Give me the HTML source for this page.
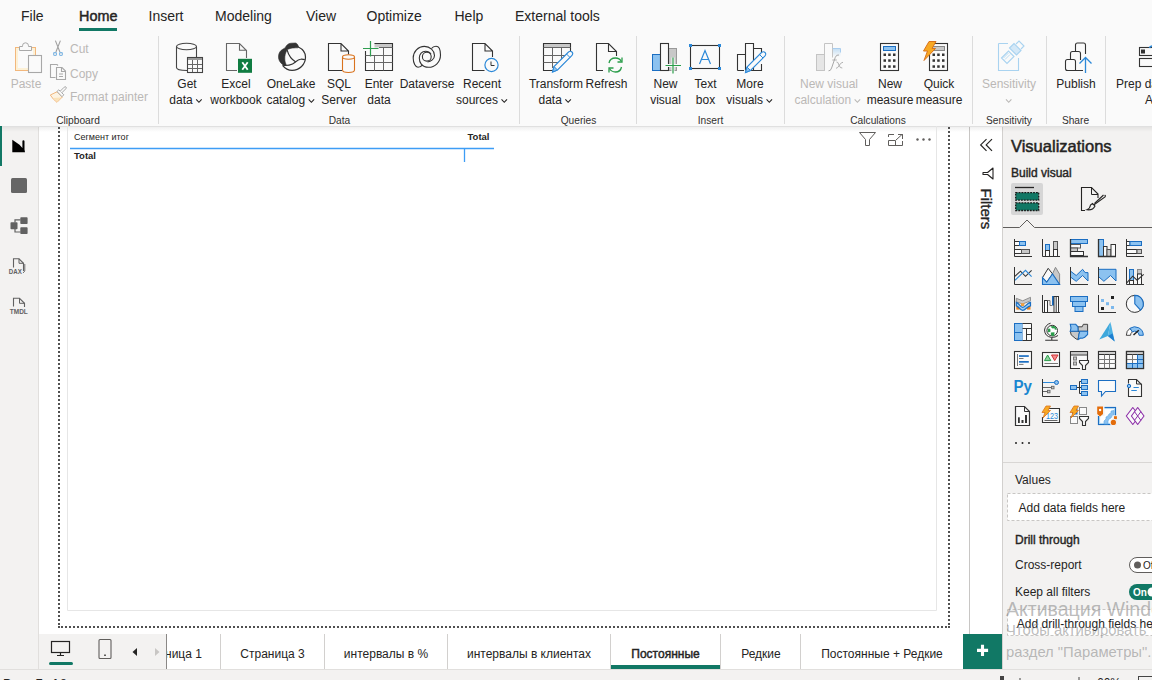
<!DOCTYPE html>
<html><head><meta charset="utf-8"><style>
html,body{margin:0;padding:0;width:1152px;height:680px;overflow:hidden;background:#fff}
svg{position:absolute;left:0;top:0;display:block}
text{font-family:"Liberation Sans",sans-serif}
</style></head><body>
<svg width="1152" height="680" viewBox="0 0 1152 680">
<rect x="0" y="0" width="1152" height="680" fill="#ffffff" />
<rect x="0" y="0" width="1152" height="126" fill="#fafafa" />
<rect x="0" y="126" width="38" height="543" fill="#f3f2f1" />
<line x1="38.5" y1="126" x2="38.5" y2="669" stroke="#e1dfdd" stroke-width="1" />
<line x1="969.5" y1="126" x2="969.5" y2="634" stroke="#c8c6c4" stroke-width="1" />
<rect x="1002" y="126" width="150" height="543" fill="#f3f2f1" />
<line x1="1002.5" y1="126" x2="1002.5" y2="669" stroke="#d2d0ce" stroke-width="1" />
<rect x="0" y="669" width="1152" height="11" fill="#f3f2f1" />
<line x1="0" y1="669.5" x2="1152" y2="669.5" stroke="#e1dfdd" stroke-width="1" />
<line x1="0" y1="126.5" x2="1152" y2="126.5" stroke="#e0e0e0" stroke-width="1" />
<defs><linearGradient id="sh" x1="0" y1="0" x2="0" y2="1"><stop offset="0" stop-color="#000" stop-opacity="0.06"/><stop offset="1" stop-color="#000" stop-opacity="0"/></linearGradient></defs>
<rect x="0" y="127" width="1152" height="5" fill="url(#sh)" />
<text x="21" y="21" font-size="14" fill="#252423" font-weight="normal" text-anchor="start" >File</text>
<text x="148.5" y="21" font-size="14" fill="#252423" font-weight="normal" text-anchor="start" >Insert</text>
<text x="215" y="21" font-size="14" fill="#252423" font-weight="normal" text-anchor="start" >Modeling</text>
<text x="306" y="21" font-size="14" fill="#252423" font-weight="normal" text-anchor="start" >View</text>
<text x="366.5" y="21" font-size="14" fill="#252423" font-weight="normal" text-anchor="start" >Optimize</text>
<text x="454.5" y="21" font-size="14" fill="#252423" font-weight="normal" text-anchor="start" >Help</text>
<text x="515" y="21" font-size="14" fill="#252423" font-weight="normal" text-anchor="start" >External tools</text>
<text x="79" y="21" font-size="14.4" fill="#252423" stroke="#252423" stroke-width="0.45" text-anchor="start" >Home</text>
<rect x="79" y="28" width="38" height="3" fill="#117865" />
<line x1="158.5" y1="36" x2="158.5" y2="124" stroke="#dcdcdc" stroke-width="1" />
<line x1="519.5" y1="36" x2="519.5" y2="124" stroke="#dcdcdc" stroke-width="1" />
<line x1="636.5" y1="36" x2="636.5" y2="124" stroke="#dcdcdc" stroke-width="1" />
<line x1="784.5" y1="36" x2="784.5" y2="124" stroke="#dcdcdc" stroke-width="1" />
<line x1="972.5" y1="36" x2="972.5" y2="124" stroke="#dcdcdc" stroke-width="1" />
<line x1="1046.5" y1="36" x2="1046.5" y2="124" stroke="#dcdcdc" stroke-width="1" />
<line x1="1105.5" y1="36" x2="1105.5" y2="124" stroke="#dcdcdc" stroke-width="1" />
<text x="78" y="123.5" font-size="10.2" fill="#323130" font-weight="normal" text-anchor="middle" >Clipboard</text>
<text x="339.5" y="123.5" font-size="10.2" fill="#323130" font-weight="normal" text-anchor="middle" >Data</text>
<text x="578.5" y="123.5" font-size="10.2" fill="#323130" font-weight="normal" text-anchor="middle" >Queries</text>
<text x="710.5" y="123.5" font-size="10.2" fill="#323130" font-weight="normal" text-anchor="middle" >Insert</text>
<text x="878" y="123.5" font-size="10.2" fill="#323130" font-weight="normal" text-anchor="middle" >Calculations</text>
<text x="1009" y="123.5" font-size="10.2" fill="#323130" font-weight="normal" text-anchor="middle" >Sensitivity</text>
<text x="1075.5" y="123.5" font-size="10.2" fill="#323130" font-weight="normal" text-anchor="middle" >Share</text>
<text x="26" y="88" font-size="12" fill="#bab8b6" font-weight="normal" text-anchor="middle" >Paste</text>
<text x="70" y="53" font-size="12" fill="#bab8b6" font-weight="normal" text-anchor="start" >Cut</text>
<text x="70" y="78" font-size="12" fill="#bab8b6" font-weight="normal" text-anchor="start" >Copy</text>
<text x="70" y="101" font-size="12" fill="#bab8b6" font-weight="normal" text-anchor="start" >Format painter</text>
<text x="187" y="88" font-size="12" fill="#252423" font-weight="normal" text-anchor="middle" >Get</text>
<text x="169.32" y="104" font-size="12" fill="#252423" font-weight="normal" text-anchor="start" >data</text>
<path d="M196.18 99.3 L198.93 102.3 L201.68 99.3" fill="none" stroke="#252423" stroke-width="1.1"/>
<text x="236" y="88" font-size="12" fill="#252423" font-weight="normal" text-anchor="middle" >Excel</text>
<text x="236" y="104" font-size="12" fill="#252423" font-weight="normal" text-anchor="middle" >workbook</text>
<text x="291" y="88" font-size="12" fill="#252423" font-weight="normal" text-anchor="middle" >OneLake</text>
<text x="266.45" y="104" font-size="12" fill="#252423" font-weight="normal" text-anchor="start" >catalog</text>
<path d="M308.65 99.3 L311.40 102.3 L314.15 99.3" fill="none" stroke="#252423" stroke-width="1.1"/>
<text x="339" y="88" font-size="12" fill="#252423" font-weight="normal" text-anchor="middle" >SQL</text>
<text x="339" y="104" font-size="12" fill="#252423" font-weight="normal" text-anchor="middle" >Server</text>
<text x="379" y="88" font-size="12" fill="#252423" font-weight="normal" text-anchor="middle" >Enter</text>
<text x="379" y="104" font-size="12" fill="#252423" font-weight="normal" text-anchor="middle" >data</text>
<text x="427" y="88" font-size="12" fill="#252423" font-weight="normal" text-anchor="middle" >Dataverse</text>
<text x="482" y="88" font-size="12" fill="#252423" font-weight="normal" text-anchor="middle" >Recent</text>
<text x="455.99" y="104" font-size="12" fill="#252423" font-weight="normal" text-anchor="start" >sources</text>
<path d="M501.51 99.3 L504.26 102.3 L507.01 99.3" fill="none" stroke="#252423" stroke-width="1.1"/>
<text x="556" y="88" font-size="12" fill="#252423" font-weight="normal" text-anchor="middle" >Transform</text>
<text x="538.52" y="104" font-size="12" fill="#252423" font-weight="normal" text-anchor="start" >data</text>
<path d="M565.38 99.3 L568.13 102.3 L570.88 99.3" fill="none" stroke="#252423" stroke-width="1.1"/>
<text x="606.5" y="88" font-size="12" fill="#252423" font-weight="normal" text-anchor="middle" >Refresh</text>
<text x="665.5" y="88" font-size="12" fill="#252423" font-weight="normal" text-anchor="middle" >New</text>
<text x="665.5" y="104" font-size="12" fill="#252423" font-weight="normal" text-anchor="middle" >visual</text>
<text x="705.5" y="88" font-size="12" fill="#252423" font-weight="normal" text-anchor="middle" >Text</text>
<text x="705.5" y="104" font-size="12" fill="#252423" font-weight="normal" text-anchor="middle" >box</text>
<text x="750" y="88" font-size="12" fill="#252423" font-weight="normal" text-anchor="middle" >More</text>
<text x="726.36" y="104" font-size="12" fill="#252423" font-weight="normal" text-anchor="start" >visuals</text>
<path d="M766.54 99.3 L769.29 102.3 L772.04 99.3" fill="none" stroke="#252423" stroke-width="1.1"/>
<text x="890" y="88" font-size="12" fill="#252423" font-weight="normal" text-anchor="middle" >New</text>
<text x="890" y="104" font-size="12" fill="#252423" font-weight="normal" text-anchor="middle" >measure</text>
<text x="939" y="88" font-size="12" fill="#252423" font-weight="normal" text-anchor="middle" >Quick</text>
<text x="939" y="104" font-size="12" fill="#252423" font-weight="normal" text-anchor="middle" >measure</text>
<text x="1076" y="88" font-size="12" fill="#252423" font-weight="normal" text-anchor="middle" >Publish</text>
<text x="829" y="88" font-size="12" fill="#bab8b6" font-weight="normal" text-anchor="middle" >New visual</text>
<text x="794.45" y="104" font-size="12" fill="#bab8b6" font-weight="normal" text-anchor="start" >calculation</text>
<path d="M854.65 99.3 L857.40 102.3 L860.15 99.3" fill="none" stroke="#bab8b6" stroke-width="1.1"/>
<text x="1009" y="88" font-size="12" fill="#bab8b6" font-weight="normal" text-anchor="middle" >Sensitivity</text>
<path d="M1006 99.3 L1008.7 102.3 L1011.4 99.3" fill="none" stroke="#bab8b6" stroke-width="1.1"/>
<text x="1116" y="88" font-size="12" fill="#252423" font-weight="normal" text-anchor="start" >Prep data for AI</text>
<text x="1145" y="104" font-size="12" fill="#252423" font-weight="normal" text-anchor="start" >AI</text>
<g id="ribbon-icons" fill="none" stroke-linejoin="miter">
<!-- Paste -->
<rect x="15.5" y="47.5" width="20" height="23" fill="#fdf1d6" stroke="#f2b77c" stroke-width="1"/>
<rect x="18" y="50" width="15" height="18" fill="#fafafa" stroke="none"/>
<path d="M19.5 50.5 V46.5 H22.5 V45.8 A3 3 0 0 1 28.5 45.8 V46.5 H31.5 V50.5 Z" fill="#fafafa" stroke="#a8a8a8" stroke-width="1"/>
<rect x="28.5" y="55.5" width="13" height="17" fill="#fafafa" stroke="#a8a8a8" stroke-width="1.1"/>
<!-- Cut -->
<path d="M55.4 40.6 L59.9 52 M60.4 40.6 L55.9 52" stroke="#a0a0a0" stroke-width="1.1"/>
<rect x="53.6" y="52.6" width="2.9" height="2.9" rx="0.9" fill="#f0f0f0" stroke="#82b8e4" stroke-width="1.1"/>
<rect x="59.5" y="52.6" width="2.9" height="2.9" rx="0.9" fill="#f0f0f0" stroke="#82b8e4" stroke-width="1.1"/>

<!-- Copy -->
<path d="M55.5 77.5 H50.5 V64.5 H57 L58 65.5" stroke="#a8a8a8" stroke-width="1.1"/>
<path d="M56.5 67.5 H62 L65.5 71 V79.5 H56.5 Z M61.5 67.5 V71.5 H65.5 M59 74 H63 M59 76.5 H63" stroke="#a8a8a8" stroke-width="1.1"/>
<!-- Format painter -->
<path d="M57 91.8 L50.3 95 Q53 99.5 57 102.3 L62.3 97 Z" fill="#fdf3e2" stroke="#f2b77c" stroke-width="1"/>
<path d="M53 98 Q55.5 99.5 57 102 L61 97.5 Z" fill="#fbe2b8"/>
<path d="M57 91.5 L58.8 89.8 L63.8 94.8 L62 96.7 Z" fill="#fafafa" stroke="#a8a8a8" stroke-width="1"/>
<path d="M60.2 91.2 L64.2 87.2 Q65.3 86.3 66 87 Q66.7 87.8 65.8 88.8 L61.8 92.8" fill="#fafafa" stroke="#a8a8a8" stroke-width="1"/>

<!-- Get data -->
<path d="M176.5 46.5 V67.5 Q176.5 70.5 187 70.5" stroke="#444" stroke-width="1.1"/>
<path d="M196.5 46.5 V57" stroke="#444" stroke-width="1.1"/>
<ellipse cx="186.5" cy="46.5" rx="10" ry="3.3" fill="#fafafa" stroke="#444" stroke-width="1.1"/>
<rect x="187.5" y="57.5" width="15" height="15" fill="#fafafa" stroke="#444" stroke-width="1.1"/>
<rect x="188" y="58" width="14" height="2" fill="#999" stroke="none"/>
<path d="M192.5 60 V72 M197.5 60 V72 M188 64.5 H202 M188 68.5 H202" stroke="#666" stroke-width="1"/>

<!-- Excel -->
<path d="M237 70.5 H226.5 V43.5 H239.5 L246.5 50.5 V58 M239.5 43.5 V50.3 H246.5" stroke="#666" stroke-width="1.1"/>
<rect x="238" y="58.8" width="14" height="14" fill="#107c41" stroke="none"/>
<path d="M242.3 62.3 L247.7 69.8 M247.7 62.3 L242.3 69.8" stroke="#fff" stroke-width="1.8"/>

<!-- OneLake -->
<path d="M285 48 C286.5 45 288.5 43.3 291 43.2 L295.5 43 C297 43.2 298 45 298.8 47.2 L297.7 47.8 C295 47.8 292.5 48 291 48.3 C289 48.8 287.8 49.3 287.1 50 C285.5 52.5 284.6 56 284.8 59 C284.9 61.5 285.4 63 286.2 64.5 L284.8 66 C282 64.5 279.3 62 278.6 58.5 C278.2 55 279 52.5 281 50.5 C282.5 49.2 284 48.5 285 48 Z" fill="#333" stroke="#333" stroke-width="0.6"/>
<path d="M298.3 47 C302.5 49 305.5 52.5 305.5 57 C305.5 64.5 299.5 70.4 292.1 70.4 C288.5 70.4 285 68.5 282.5 65.4" stroke="#333" stroke-width="1.2"/>
<path d="M287.1 50 C288.5 55 291.5 59.5 295.8 62" stroke="#333" stroke-width="1.1"/>
<path d="M283.2 65.4 C286.5 65.6 290 65.2 292.5 64 C295 62.8 297.5 59.5 300.5 59.2 C302 59 303.3 59.2 304.8 59.6" stroke="#333" stroke-width="1.1"/>

<!-- SQL Server -->
<path d="M342 70.5 H328.5 V43.5 H341 L348.5 51 V54.5 M341 43.5 V51 H348.5" stroke="#333" stroke-width="1.1"/>
<path d="M342.5 57 V70 Q342.5 72.5 348.5 72.5 Q354.5 72.5 354.5 70 V57" fill="#fafafa" stroke="#d9731e" stroke-width="1.1"/>
<ellipse cx="348.5" cy="57" rx="6" ry="2.2" fill="#fafafa" stroke="#d9731e" stroke-width="1.1"/>

<!-- Enter data -->
<rect x="374.5" y="43.5" width="18" height="4" fill="#c8c8c8" stroke="none"/>
<path d="M374.5 43.5 H392.5 V70.5 H365.5 V51" stroke="#333" stroke-width="1.1"/>
<path d="M379 47.5 H392.5 M374.5 55.5 V70.5 M383.5 47.5 V70.5 M365.5 55.5 H392.5 M365.5 62.5 H392.5" stroke="#666" stroke-width="1"/>
<path d="M370.5 41 V56.5 M363 48.5 H378.5" stroke="#2e9e4f" stroke-width="1.2"/>

<!-- Dataverse -->
<path d="M427.5 62 C431 61.5 434.5 59 434.5 55.5 C434.5 50.5 430 46.4 424.5 46.4 C418 46.4 413.2 52 413.2 58 C413.2 63 415.5 67.3 418 67.3 C420 67.3 421.5 66 422.5 64.8" stroke="#333" stroke-width="1.1"/>
<path d="M431.5 48.5 C432.5 47 434 46.2 436 46.2 C438.8 46.2 440.5 50 440.5 55 C440.5 62 435 67.3 428.5 67.3 C421.5 67.3 419.3 62 419.3 58 C419.3 54 422 51.3 425.5 51.3 C428 51.3 430 52.5 431 54" stroke="#333" stroke-width="1.1"/>
<circle cx="426.8" cy="56.7" r="4.4" stroke="#333" stroke-width="1.1"/>

<!-- Recent sources -->
<path d="M484.5 70.5 H472.5 V43.5 H485 L492.5 51 V57 M485 43.5 V51 H492.5" stroke="#333" stroke-width="1.1"/>
<circle cx="491.5" cy="65" r="6.6" fill="#fafafa" stroke="#2b88d8" stroke-width="1.2"/>
<path d="M491 61.5 V65.5 H494.5" stroke="#333" stroke-width="1"/>

<!-- Transform data -->
<rect x="543.5" y="43.5" width="27" height="3.5" fill="#c8c8c8" stroke="none"/>
<path d="M553 70.5 H543.5 V43.5 H570.5 V55" stroke="#333" stroke-width="1.1"/>
<path d="M543.5 47.5 H570.5 M552.5 47.5 V68 M561.5 47.5 V60 M543.5 55.5 H566 M543.5 62.5 H558" stroke="#666" stroke-width="1"/>
<path d="M552.5 72 L554 66.5 L568.5 52 Q570.5 50.5 572 52 Q573.5 53.5 572 55.5 L557.5 70 Z" fill="#fafafa" stroke="#2b88d8" stroke-width="1.1"/>
<path d="M552.5 72 L554 66.5 L557.5 70 Z" fill="#8cc2f0" stroke="#2b88d8" stroke-width="1"/>
<path d="M566.5 54 L570 57.5" stroke="#2b88d8" stroke-width="1"/>

<!-- Refresh -->
<path d="M603 70.5 H596.5 V43.5 H608.5 L616.5 51.5 V56 M608.5 43.5 V51.5 H616.5" stroke="#333" stroke-width="1.1"/>
<path d="M609 63 Q610 58 615.5 58 Q619.5 58 621.5 61.5 M621.5 67 Q620.5 72 615.5 72 Q611.5 72 609.5 68.5" stroke="#2a9d4a" stroke-width="1.3"/>
<path d="M622 57.5 V62 H617.5 M609 72.5 V68 H613.5" stroke="#2a9d4a" stroke-width="1.3"/>

<!-- New visual -->
<rect x="652.5" y="54.5" width="8" height="16" fill="#8cc2f0" stroke="#1b6ec2" stroke-width="1"/>
<rect x="668.5" y="48.5" width="8" height="22" fill="#c8c8c8" stroke="#999" stroke-width="1"/>
<rect x="660.5" y="43.5" width="8" height="27" fill="#fafafa" stroke="#333" stroke-width="1.1"/>
<path d="M673 57.5 V73.5 M665.5 65.5 H681" stroke="#fafafa" stroke-width="3"/>
<path d="M673 57.5 V73.5 M665.5 65.5 H681" stroke="#2a9d4a" stroke-width="1.2"/>

<!-- Text box -->
<rect x="690.5" y="45.5" width="29" height="23" stroke="#333" stroke-width="1.1"/>
<rect x="689" y="44" width="3" height="3" fill="#2b88d8" stroke="none"/>
<rect x="718" y="44" width="3" height="3" fill="#2b88d8" stroke="none"/>
<rect x="689" y="67" width="3" height="3" fill="#2b88d8" stroke="none"/>
<rect x="718" y="67" width="3" height="3" fill="#2b88d8" stroke="none"/>
<path d="M699.5 64 L705 50.5 L710.5 64 M701.3 59.5 H708.7" stroke="#2b88d8" stroke-width="1.2"/>

<!-- More visuals -->
<path d="M737.5 70.5 V54.5 H745.5 M745.5 70.5 V43.5 H753.5 V70.5 M753.5 48.5 H761.5 V58 M761.5 64 V70.5 H749 M737.5 70.5 H744" stroke="#333" stroke-width="1.1"/>
<path d="M745.5 72.5 L747 67 L761.5 52.5 Q763.5 51 765 52.5 Q766.5 54 765 56 L750.5 70.5 Z" fill="#fafafa" stroke="#2b88d8" stroke-width="1.1"/>
<path d="M745.5 72.5 L747 67 L750.5 70.5 Z" fill="#8cc2f0" stroke="#2b88d8" stroke-width="1"/>
<path d="M759.5 54.5 L763 58" stroke="#2b88d8" stroke-width="1"/>

<!-- New visual calculation (disabled) -->
<rect x="816.5" y="54.5" width="8" height="16" fill="#e6e6e6" stroke="#c4c4c4" stroke-width="1"/>
<path d="M824.5 70.5 V43.5 H832.5 V57.5" fill="#fafafa" stroke="#c4c4c4" stroke-width="1"/>
<defs><linearGradient id="nvc" x1="0" y1="0" x2="0" y2="1"><stop offset="0" stop-color="#c7e0f4"/><stop offset="1" stop-color="#c7e0f4" stop-opacity="0"/></linearGradient></defs>
<path d="M833 49 H840.5 V57 H833 Z" fill="url(#nvc)" stroke="none"/>
<path d="M832.5 48.5 H840.5 V52.5" stroke="#a9cdee" stroke-width="1"/>
<path d="M828.5 70.8 Q830.6 71.2 831.6 68 L835.3 57.3 Q836.4 54.4 839 55" stroke="#a8a8a8" stroke-width="1"/>
<path d="M832.3 60 H836.8" stroke="#a8a8a8" stroke-width="0.9"/>
<path d="M836.5 62 Q838 61.5 839 65 Q840 68.5 842.3 68" stroke="#a8a8a8" stroke-width="0.9"/>
<path d="M843 62.3 Q841.5 62 839.5 65 Q837.5 68.5 836 68.3" stroke="#a8a8a8" stroke-width="0.9"/>

<!-- New measure -->
<rect x="880.5" y="43.5" width="18" height="27" fill="#fafafa" stroke="#333" stroke-width="1.1"/>
<rect x="883.5" y="46.5" width="12" height="4" fill="#8cc2f0" stroke="#1b6ec2" stroke-width="1"/>
<g fill="#333" stroke="none">
<rect x="883.5" y="53.5" width="2.5" height="2.5"/><rect x="888.2" y="53.5" width="2.5" height="2.5"/><rect x="893" y="53.5" width="2.5" height="2.5"/>
<rect x="883.5" y="59.3" width="2.5" height="2.5"/><rect x="888.2" y="59.3" width="2.5" height="2.5"/><rect x="893" y="59.3" width="2.5" height="2.5"/>
<rect x="883.5" y="65.3" width="2.5" height="2.5"/><rect x="888.2" y="65.3" width="2.5" height="2.5"/><rect x="893" y="65.3" width="2.5" height="2.5"/>
</g>

<!-- Quick measure -->
<rect x="929.5" y="43.5" width="18" height="27" fill="#fafafa" stroke="#333" stroke-width="1.1"/>
<rect x="932.5" y="46.5" width="12" height="4" fill="#c8c8c8" stroke="#888" stroke-width="1"/>
<g fill="#333" stroke="none">
<rect x="932.5" y="53.5" width="2.5" height="2.5"/><rect x="937.2" y="53.5" width="2.5" height="2.5"/><rect x="942" y="53.5" width="2.5" height="2.5"/>
<rect x="932.5" y="59.3" width="2.5" height="2.5"/><rect x="937.2" y="59.3" width="2.5" height="2.5"/><rect x="942" y="59.3" width="2.5" height="2.5"/>
<rect x="932.5" y="65.3" width="2.5" height="2.5"/><rect x="937.2" y="65.3" width="2.5" height="2.5"/><rect x="942" y="65.3" width="2.5" height="2.5"/>
</g>
<path d="M929 41.5 H936 L932 48.5 H935.5 L924 60.5 L927.5 51 H923.5 Z" fill="#f7a823" stroke="#d9731e" stroke-width="1"/>

<!-- Sensitivity (disabled) -->
<path d="M998.5 43.5 H1008 M1018.5 58 V70.5 H998.5 V43.5" stroke="#a9d3f0" stroke-width="1.1"/>
<path d="M1001.5 58 L1008.5 51 L1014 56.5 L1007 63.5 Z" stroke="#a9d3f0" stroke-width="1.1"/>
<path d="M1003.5 58 L1008.5 53 M1005 59.5 L1010 54.5" stroke="#a9d3f0" stroke-width="0.8"/>
<path d="M1009.5 48 L1014 43.5 L1021 50.5 L1016.5 55 Z" fill="#d4e8f7" stroke="#a9d3f0" stroke-width="1.1"/>
<path d="M1016 44 L1019 41 L1024 46 L1021 49" stroke="#a9d3f0" stroke-width="1.1"/>

<!-- Publish -->
<path d="M1075.5 70.5 H1067.5 Q1065.5 70.5 1065.5 68.5 V61.5 Q1065.5 59.5 1067.5 59.5 H1073.5 Q1075.5 59.5 1075.5 61.5 V70.5 M1075.5 70.5 H1083" stroke="#333" stroke-width="1.1"/>
<path d="M1070.5 59.5 V53.5 Q1070.5 51.5 1072.5 51.5 H1078.5 Q1080.5 51.5 1080.5 53.5 V60" stroke="#333" stroke-width="1.1"/>
<path d="M1075.5 51.5 V45 Q1075.5 43 1077.5 43 H1083.5 Q1085.5 43 1085.5 45 V54" stroke="#333" stroke-width="1.1"/>
<path d="M1085.5 73 V57.5 M1079.5 63.5 L1085.5 57.5 L1091.5 63.5" stroke="#2b88d8" stroke-width="1.3"/>

<!-- Prep data for AI -->
<rect x="1139.5" y="47.5" width="14" height="8" stroke="#333" stroke-width="1.1"/>
<rect x="1141" y="49.5" width="4" height="4" fill="#333" stroke="none"/>
<rect x="1139.5" y="58.5" width="14" height="8" stroke="#333" stroke-width="1.1"/>
<path d="M1149.5 48 Q1150 46 1152.5 46" stroke="#2b88d8" stroke-width="1.6"/>
</g>

<path d="M59 127 V625 M949 127 V625 M61 627 H947" fill="none" stroke="#505050" stroke-width="2" stroke-dasharray="2 2"/>
<rect x="58" y="626" width="2" height="2" fill="#505050" />
<rect x="948" y="626" width="2" height="2" fill="#505050" />
<path d="M67.5 126 V610.5 H936.5 V126" fill="none" stroke="#e6e6e6" stroke-width="1"/>
<text x="74" y="140.3" font-size="9" fill="#252423" font-weight="normal" text-anchor="start" >Сегмент итог</text>
<text x="489.5" y="140.3" font-size="9.5" fill="#252423" font-weight="bold" text-anchor="end" >Total</text>
<line x1="70" y1="148.5" x2="494" y2="148.5" stroke="#3d9df5" stroke-width="1.3" />
<line x1="464.5" y1="148" x2="464.5" y2="162" stroke="#3d9df5" stroke-width="1.3" />
<text x="74" y="159" font-size="9.5" fill="#252423" font-weight="bold" text-anchor="start" >Total</text>
<path d="M859.5 132.5 H875.5 L869.5 139.5 V145.5 H865.5 V139.5 Z" fill="none" stroke="#605e5c" stroke-width="1"/>
<path d="M888.5 137 V134.5 H894 M899 134.5 H902.5 V138 M902.5 141 V145.5 H888.5 V140.5 M888.5 140.5 H895.5 V145.5 M896 140 L902 134.5 M898 134.5 H902.5 V139" fill="none" stroke="#605e5c" stroke-width="1"/>
<circle cx="917.5" cy="139.5" r="1.2" fill="#605e5c"/>
<circle cx="923.5" cy="139.5" r="1.2" fill="#605e5c"/>
<circle cx="929.5" cy="139.5" r="1.2" fill="#605e5c"/>
<rect x="0" y="126" width="2" height="40" fill="#117865" />
<path d="M12.3 139.8 L19.5 144.8 L22.4 148 V141.2 Q22.4 140.3 23.4 140.3 Q24.5 140.3 24.5 141.2 V149.5 L25 152.3 H12.3 Z" fill="#000"/>
<rect x="11" y="178" width="16" height="15" fill="#666" rx="1.5"/>
<g fill="#616161"><rect x="10.5" y="222.3" width="7" height="7" rx="0.8"/><rect x="20.3" y="217.3" width="7.3" height="6.8" rx="0.8"/><rect x="20.3" y="227.2" width="7.3" height="6.8" rx="0.8"/></g>
<path d="M15 222.5 V219.8 H20.5 M15 229 V232 H20.5" fill="none" stroke="#616161" stroke-width="1.2"/>
<path d="M13.5 267.5 V258.8 H19 L23.5 263.3 V271" fill="none" stroke="#616161" stroke-width="1.1"/><path d="M19 258.8 V263.3 H23.5" fill="none" stroke="#616161" stroke-width="1"/><path d="M24.8 264 V271 L23 273" fill="none" stroke="#616161" stroke-width="0.9"/>
<text x="8.8" y="273.8" font-size="6.3" font-weight="bold" fill="#616161" textLength="13" lengthAdjust="spacingAndGlyphs">DAX</text>
<path d="M13.5 306.5 V298.3 H19.5 L24.5 303.3 V307" fill="none" stroke="#616161" stroke-width="1.1"/><path d="M19.5 298.3 V303.3 H24.5" fill="none" stroke="#616161" stroke-width="1"/>
<text x="9.8" y="313.8" font-size="6.3" font-weight="bold" fill="#616161" textLength="18" lengthAdjust="spacingAndGlyphs">TMDL</text>
<path d="M986.5 139.1 L980.7 144.9 L986.5 150.8 M992 139.1 L986.2 144.9 L992 150.8" fill="none" stroke="#252423" stroke-width="1.2"/>
<path d="M993 168 V179 L987.6 174.5 H983 V172.5 H987.6 Z" fill="none" stroke="#252423" stroke-width="1.1" stroke-linejoin="round"/>
<text x="0" y="0" font-size="15" fill="#252423" stroke="#252423" stroke-width="0.35" text-anchor="start" transform="translate(981,188.5) rotate(90)">Filters</text>
<text x="1011" y="152" font-size="16.5" fill="#252423" stroke="#252423" stroke-width="0.5" text-anchor="start" >Visualizations</text>
<text x="1011" y="177" font-size="12" fill="#252423" stroke="#252423" stroke-width="0.4" text-anchor="start" >Build visual</text>
<rect x="1011" y="183" width="32" height="32" fill="#d6d6d6" rx="2"/>
<g transform="translate(1014,239)">
<rect x="0.5" y="2.5" width="5" height="4" fill="#fafafa" stroke="#333"/>
<rect x="5.5" y="2.5" width="6" height="4" fill="#8cc2f0" stroke="#1b6ec2"/>
<rect x="0.5" y="10.5" width="7" height="4" fill="#fafafa" stroke="#333"/>
<rect x="7.5" y="10.5" width="8" height="4" fill="#c8c8c8" stroke="#555"/>
<path d="M0.5 0 V17.5 H18" fill="none" stroke="#333"/></g>
<g transform="translate(1042,239)">
<rect x="3.5" y="5.5" width="4" height="6" fill="#8cc2f0" stroke="#1b6ec2"/>
<rect x="3.5" y="11.5" width="4" height="6" fill="#fafafa" stroke="#333"/>
<rect x="11.5" y="2.5" width="4" height="8" fill="#c8c8c8" stroke="#555"/>
<rect x="11.5" y="10.5" width="4" height="7" fill="#fafafa" stroke="#333"/>
<path d="M0.5 0 V17.5 H18" fill="none" stroke="#333"/></g>
<g transform="translate(1070,239)">
<rect x="0.5" y="0.5" width="17" height="4" fill="#8cc2f0" stroke="#1b6ec2"/>
<rect x="0.5" y="5.5" width="10" height="3.5" fill="#fafafa" stroke="#333" stroke-opacity="0.8"/>
<rect x="0.5" y="9" width="7" height="3.5" fill="#c8c8c8" stroke="#555"/>
<rect x="0.5" y="12.5" width="13" height="4" fill="#fafafa" stroke="#333"/>
<path d="M0.5 0 V17.5 H18" fill="none" stroke="#333" stroke-width="1.3"/></g>
<g transform="translate(1098,239)">
<rect x="0.5" y="0.5" width="5" height="17" fill="#8cc2f0" stroke="#1b6ec2"/>
<rect x="5.5" y="7.5" width="3.5" height="10" fill="#fafafa" stroke="#333"/>
<rect x="9" y="10.5" width="4" height="7" fill="#c8c8c8" stroke="#555"/>
<rect x="13" y="5.5" width="4.5" height="12" fill="#fafafa" stroke="#333"/>
<path d="M0.5 0 V17.5 H18" fill="none" stroke="#333" stroke-width="1.3"/></g>
<g transform="translate(1126,239)">
<rect x="0.5" y="2.5" width="3.5" height="4" fill="#fafafa" stroke="#333"/>
<rect x="4" y="2.5" width="11.5" height="4" fill="#8cc2f0" stroke="#1b6ec2"/>
<rect x="0.5" y="10.5" width="10.5" height="4" fill="#fafafa" stroke="#333"/>
<rect x="11" y="10.5" width="4.5" height="4" fill="#c8c8c8" stroke="#555"/>
<path d="M0.5 0 V17.5 H18" fill="none" stroke="#333"/></g>
<g transform="translate(1014,267)">
<path d="M0.5 9.6 L6.5 4.2 L11.5 9.3 L17.6 3.3" fill="none" stroke="#333" stroke-width="1.1"/>
<path d="M0.5 13.7 L11.5 3.3 L17.6 9.6" fill="none" stroke="#2b88d8" stroke-width="1.1"/>
<path d="M0.5 0 V17.5 H18" fill="none" stroke="#333"/></g>
<g transform="translate(1042,267)">
<path d="M10.5 6.9 L13.5 0.3 L17.6 7.2 V17.5 Z" fill="#c8c8c8" stroke="#888"/>
<path d="M0.5 10.6 L6.2 1.3 L10.5 6.9 L4.7 15.2 Z" fill="#fafafa" stroke="#333"/>
<path d="M0.5 10.6 L4.7 15.2 L10.5 6.9 L17.6 17.5 H0.5 Z" fill="#8cc2f0" stroke="#1b6ec2" stroke-width="1.1"/></g>
<g transform="translate(1070,267)">
<path d="M0.5 4.1 L6.2 8.5 L12.6 2.3 L15.1 5.6 H18 V14 L12.6 8.5 L6.2 14.3 L0.5 10 Z" fill="#8cc2f0" stroke="#1b6ec2"/>
<path d="M0.5 0 V17.5 H18" fill="none" stroke="#333"/></g>
<g transform="translate(1098,267)">
<path d="M0.5 2.3 H18 V14 L12.5 8.5 L5.9 14.3 L0.5 9.6 Z" fill="#8cc2f0" stroke="#1b6ec2"/>
<path d="M0.5 0 V17.5 H18" fill="none" stroke="#333"/></g>
<g transform="translate(1126,267)">
<rect x="3.5" y="2.5" width="4" height="11" fill="#8cc2f0" stroke="#1b6ec2"/>
<rect x="3.5" y="13.5" width="4" height="4" fill="#fafafa" stroke="#333"/>
<rect x="11.5" y="2.5" width="4" height="4.5" fill="#c8c8c8" stroke="#888"/>
<rect x="11.5" y="7" width="4" height="10.5" fill="#fafafa" stroke="#333"/>
<path d="M0.5 16.2 L6.7 9.2 L11.1 13.2 L17.7 7.4" fill="none" stroke="#333" stroke-width="1.1"/>
<path d="M0.5 0 V17.5 H18" fill="none" stroke="#333"/></g>
<g transform="translate(1014,295)">
<path d="M2.3 3.3 L8.7 5.8 L16.5 2.3 V5.8 L8.7 9 L2.3 6.9 Z" fill="#c8c8c8" stroke="#888" stroke-width="0.9"/>
<rect x="2.3" y="11" width="3.5" height="3.6" fill="#e8821e"/>
<rect x="7" y="8.2" width="3.3" height="2.8" fill="#f0a040"/>
<rect x="13" y="11" width="3.5" height="3.6" fill="#e8821e"/>
<path d="M2.3 7.3 C5 7.8 6 12.3 8.7 12.3 C11.5 12.3 13 7.8 16.5 7.3 V10.8 C13 11.3 11.5 15.3 8.7 15.3 C6 15.3 5 11.3 2.3 10.8 Z" fill="#9fd0f5" stroke="#1b6ec2" stroke-width="1.2"/>
<path d="M0.5 0 V17.5 H18" fill="none" stroke="#333"/></g>
<g transform="translate(1042,295)">
<rect x="2.5" y="5.5" width="3" height="12" fill="#fff" stroke="#333"/>
<path d="M5.5 5.5 H8 V10.5 H10" fill="none" stroke="#777"/>
<rect x="10" y="1" width="2" height="9.5" fill="#1b6ec2"/>
<rect x="12" y="1.5" width="4.5" height="16" fill="#fff" stroke="#333"/>
<path d="M14.2 1.5 V17.5" stroke="#333"/>
<path d="M0.5 0 V17.5 H18" fill="none" stroke="#333"/></g>
<g transform="translate(1070,295)">
<rect x="0.5" y="1.5" width="17" height="5" fill="#8cc2f0" stroke="#1b6ec2"/>
<rect x="2.5" y="6.5" width="13" height="5" fill="#8cc2f0" stroke="#1b6ec2"/>
<rect x="5" y="11.5" width="8" height="5" fill="#8cc2f0" stroke="#1b6ec2"/></g>
<g transform="translate(1098,295)">
<rect x="13" y="1" width="3" height="3" fill="#222"/>
<rect x="3" y="4" width="3" height="3" fill="#7cb8ec"/>
<rect x="8" y="7.2" width="3" height="3" fill="#7cb8ec"/>
<rect x="13" y="11" width="3" height="3" fill="#7cb8ec"/>
<rect x="3" y="12" width="3" height="3" fill="#222"/>
<path d="M0.5 0 V17.5 H18" fill="none" stroke="#333"/></g>
<g transform="translate(1126,295)">
<circle cx="8.8" cy="8.9" r="8.5" fill="#fafafa" stroke="#333"/>
<path d="M8.8 8.9 V0.4 A8.5 8.5 0 0 1 14.6 15.1 Z" fill="#8cc2f0" stroke="#1b6ec2" stroke-width="1.1"/></g>
<g transform="translate(1014,323)">
<rect x="0.5" y="0.5" width="8" height="9" fill="#8cc2f0" stroke="#1b6ec2"/>
<rect x="0.5" y="9.5" width="8" height="8" fill="#8cc2f0" stroke="#1b6ec2"/>
<path d="M8.5 0.5 H17.5 V17.5 H8.5 M8.5 5.5 H17.5 M12.5 5.5 V17.5 M12.5 11.5 H17.5" fill="#fafafa" stroke="#333"/></g>
<g transform="translate(1042,323)">
<circle cx="10.2" cy="7.6" r="5.3" fill="#fff" stroke="#333" stroke-width="1"/>
<path d="M8.3 3.5 Q10 2.6 12.5 3 Q14.5 4.5 14.8 6.5 L12.8 6.8 L12.5 5.2 L10.5 5.5 Z" fill="#2a9d4a"/>
<path d="M6.3 5.5 L8.2 5.8 L8.6 8.6 L6.5 9.5 Q5.2 7.5 6.3 5.5 Z" fill="#2a9d4a"/>
<path d="M8.8 9.5 L12.5 9.3 L12.3 12.7 Q10 13.3 8.8 12 Z" fill="#2a9d4a"/>
<path d="M8.6 0.2 Q3.5 1.5 2.5 7 Q2.8 13.5 9.5 14.4 Q13.5 14.5 16 12.5" fill="none" stroke="#333" stroke-width="1"/>
<path d="M9.8 14.4 V17.3 M3.2 17.3 H15.8" fill="none" stroke="#333" stroke-width="1.1"/></g>
<g transform="translate(1070,323)">
<path d="M0.3 8.3 L1.2 11.9 L6.1 16 L7.9 16.4 L9 11.9 L9.7 8.3 Z" fill="#c8c8c8" stroke="#333" stroke-width="0.9"/>
<path d="M7.9 3.8 H12.2 L13.3 1.3 H17.6 V8.3 H8.1 Z" fill="#c8c8c8" stroke="#333" stroke-width="0.9"/>
<path d="M0.3 1.3 H5.7 L7.9 3.8 L8.1 8.3 H0.3 Q1.6 5.1 0.3 1.3 Z" fill="#8cc2f0" stroke="#1b6ec2" stroke-width="1.1"/>
<path d="M9.7 8.3 H17.6 V11.4 L14.7 14.2 L12.4 15.3 L10.6 15.1 L8.4 16.4 L8.8 11.9 Z" fill="#8cc2f0" stroke="#1b6ec2" stroke-width="1.1"/></g>
<g transform="translate(1098,323)">
<path d="M12.5 -0.9 L1.3 16.4 L9.9 13 Z" fill="#3ea8dc"/>
<path d="M12.5 -0.9 L9.9 13 L16.7 18.6 Z" fill="#4fb3e4"/>
<path d="M9.9 13 L16.7 18.6 L14.5 10.5 Z" fill="#1f7fd0"/></g>
<g transform="translate(1126,323)">
<path d="M0.3 12.3 A8.5 8.5 0 0 1 4 5.3 L6.4 8.9 A4.3 4.3 0 0 0 4.5 12.3 Z" fill="#fff" stroke="#333" stroke-width="0.9"/>
<path d="M4 5.3 A8.5 8.5 0 0 1 17.3 12.3 H13.1 A4.3 4.3 0 0 0 6.4 8.9 Z" fill="#8cc2f0" stroke="#1b6ec2" stroke-width="1"/>
<path d="M7.5 12 L12.8 7.2" stroke="#222" stroke-width="1.5"/></g>
<g transform="translate(1014,351)">
<rect x="0.5" y="0.5" width="17" height="17" fill="#fafafa" stroke="#333" stroke-width="1.1"/>
<path d="M3.5 3 V15" stroke="#777"/>
<rect x="5" y="4.2" width="9.8" height="1.7" fill="#1b6ec2"/>
<rect x="5" y="10" width="9.8" height="1.7" fill="#1b6ec2"/>
<path d="M5 7.5 H9.5 M5 13.4 H9.5" stroke="#777"/></g>
<g transform="translate(1042,351)">
<rect x="0.5" y="1.5" width="17" height="14" fill="#fafafa" stroke="#333" stroke-width="1.1"/>
<path d="M2.5 9.6 L5.6 4 L8.8 9.6 Z" fill="#8fd19e" stroke="#2a9d4a"/>
<path d="M9.5 4 H16 L12.7 9.6 Z" fill="#f28b8b" stroke="#d13438"/>
<path d="M2.5 12.5 H16" stroke="#777"/></g>
<g transform="translate(1070,351)">
<path d="M10 17.5 H0.5 V0.5 H17.5 V9.5" fill="#fafafa" stroke="#333" stroke-width="1.1"/>
<rect x="1" y="1" width="16" height="2.5" fill="#c8c8c8"/>
<path d="M0.5 4 H17.5" stroke="#333"/>
<rect x="3.5" y="6" width="3" height="3" fill="#c8c8c8" stroke="#777"/>
<rect x="3.5" y="11" width="3" height="3" fill="#c8c8c8" stroke="#777"/>
<path d="M9.5 9.5 H18.5 V11.5 L15.5 14.5 V18.5 H12.5 V14.5 L9.5 11.5 Z" fill="#fafafa" stroke="#333" stroke-width="1.1"/></g>
<g transform="translate(1098,351)">
<rect x="0.5" y="0.5" width="17" height="17" fill="#fafafa" stroke="#333" stroke-width="1.2"/>
<rect x="1" y="1" width="16" height="2.5" fill="#d0d0d0"/>
<path d="M0.5 3.5 H17.5" stroke="#333"/>
<path d="M6.5 3.5 V17.5 M11.5 3.5 V17.5 M0.5 8.5 H17.5 M0.5 12.5 H17.5" stroke="#777"/></g>
<g transform="translate(1126,351)">
<rect x="0.5" y="0.5" width="17" height="17" fill="#fafafa" stroke="#333" stroke-width="1.2"/>
<rect x="1" y="1" width="16" height="2.5" fill="#d0d0d0"/>
<rect x="11.5" y="3.5" width="6" height="14" fill="#8cc2f0"/>
<rect x="0.5" y="12.5" width="17" height="5" fill="#8cc2f0"/>
<path d="M0.5 3.5 H17.5" stroke="#333"/>
<path d="M6.5 3.5 V12.5 M0.5 8.5 H11.5" stroke="#777"/>
<path d="M11.5 3.5 V17.5 M6.5 12.5 V17.5 M0.5 12.5 H17.5 M11.5 8.5 H17.5" stroke="#1b6ec2"/>
<rect x="0.5" y="0.5" width="17" height="17" fill="none" stroke="#333" stroke-width="1.2"/></g>
<g transform="translate(1014,379)"><text x="-0.5" y="13" font-family="Liberation Sans" font-weight="bold" font-size="16" fill="#1b87d0" textLength="18.5" lengthAdjust="spacingAndGlyphs">Py</text></g>
<g transform="translate(1042,379)">
<path d="M1 3.5 H12.5" stroke="#2b88d8"/>
<circle cx="14.5" cy="3.5" r="2" fill="#8cc2f0" stroke="#1b6ec2"/>
<path d="M1 8.5 H9.5 M1 12.5 H5.5" stroke="#666"/>
<rect x="9.5" y="7.3" width="2.5" height="2.5" fill="#c8c8c8" stroke="#666" stroke-width="0.9"/>
<rect x="5.5" y="11.3" width="2.5" height="2.5" fill="#c8c8c8" stroke="#666" stroke-width="0.9"/>
<path d="M0.5 0 V17.5 H18" fill="none" stroke="#333"/></g>
<g transform="translate(1070,379)">
<path d="M6.5 8.5 H9.5 M9.5 2.5 V14.5 M9.5 2.5 H11.5 M9.5 8.5 H11.5 M9.5 14.5 H11.5" fill="none" stroke="#333"/>
<rect x="0.5" y="6.5" width="6" height="4" fill="#8cc2f0" stroke="#1b6ec2"/>
<rect x="11.5" y="0.5" width="6" height="4" fill="#8cc2f0" stroke="#1b6ec2"/>
<rect x="11.5" y="6.5" width="6" height="4" fill="#8cc2f0" stroke="#1b6ec2"/>
<rect x="11.5" y="12.5" width="6" height="4" fill="#8cc2f0" stroke="#1b6ec2"/></g>
<g transform="translate(1098,379)"><path d="M0.5 1.5 H17.5 V12.5 H7.5 L3.5 17 V12.5 H0.5 Z" fill="#fafafa" stroke="#1b6ec2" stroke-width="1.1"/></g>
<g transform="translate(1126,379)">
<path d="M2.5 4.5 V0.5 H10.5 L15.5 5.5 V17.5 H2.5 V9" fill="#fafafa" stroke="#333" stroke-width="1.1"/>
<path d="M10.5 0.5 V5 H15.5" fill="none" stroke="#333"/>
<circle cx="3" cy="7" r="1.7" fill="#8cc2f0" stroke="#1b6ec2"/>
<path d="M7.5 8.5 H12.8 M5.3 11.5 H10.8" stroke="#2b88d8"/></g>
<g transform="translate(1014,407)">
<path d="M1.5 -0.5 H10.5 L15.5 4.5 V18.5 H1.5 Z" fill="#fafafa" stroke="#333" stroke-width="1.2"/>
<path d="M10.5 -0.5 V4.5 H15.5" fill="none" stroke="#333"/>
<rect x="4" y="10.3" width="1.8" height="5.7" fill="#333"/>
<rect x="7.5" y="13" width="2" height="3" fill="#333"/>
<rect x="11" y="8" width="2" height="8" fill="#333"/></g>
<g transform="translate(1042,407)">
<path d="M6 1.5 H17.5 V15.5 H0.5 V10" fill="#fafafa" stroke="#333" stroke-width="1.1"/>
<text x="4" y="12" font-family="Liberation Sans" font-size="9.5" fill="#2b88d8" textLength="12" lengthAdjust="spacingAndGlyphs">123</text>
<path d="M2.5 13.5 H15.5" stroke="#666"/>
<path d="M4 -1 H8.5 L6 3.5 H8.5 L1 11 L3 5.5 H0 Z" fill="#f7a823" stroke="#d9731e" stroke-width="0.8"/></g>
<g transform="translate(1070,407)">
<rect x="2" y="1.5" width="5.5" height="6" fill="#1b6ec2"/>
<rect x="9.5" y="0.5" width="7" height="7" fill="#fafafa" stroke="#888"/>
<rect x="0.5" y="9.5" width="7" height="7" fill="#fafafa" stroke="#888"/>
<path d="M9.5 9.5 H18.5 V11.5 L15.5 14.5 V18.5 H12.5 V14.5 L9.5 11.5 Z" fill="#fafafa" stroke="#333" stroke-width="1.1"/>
<path d="M4 -1 H8.5 L6 3.5 H8.5 L1 11 L3 5.5 H0 Z" fill="#f7a823" stroke="#d9731e" stroke-width="0.8"/></g>
<g transform="translate(1098,407)">
<rect x="0.5" y="0.5" width="17" height="17" fill="#fff" stroke="#1b6ec2" stroke-width="1.2"/>
<rect x="1.6" y="1.6" width="14.8" height="14.8" fill="none" stroke="#a9d3f0" stroke-width="1"/>
<path d="M6 17 V14 L8 12 V10 L10 9 L11 7 L13 6 V4 L16 3.5 V8 L14 9 L13 11 L11 12 L10 14 V17 Z" fill="#8cc2f0" stroke="#5aa7e8" stroke-width="0.6"/>
<rect x="-1" y="-1" width="7.5" height="10" fill="#f3f2f1"/>
<path d="M-0.8 -0.6 H5 V7 L2.1 9.6 L-0.8 7 Z" fill="#e36c0a"/>
<circle cx="2.1" cy="3" r="1.2" fill="#fff"/>
<rect x="14.6" y="8.3" width="4.6" height="4.4" fill="#f3f2f1"/>
<rect x="16" y="9.2" width="2.9" height="2.9" fill="#e36c0a"/>
<circle cx="15.4" cy="15.4" r="3.6" fill="#f3f2f1"/>
<circle cx="15.4" cy="15.4" r="2.6" fill="#e36c0a"/></g>
<g transform="translate(1126,407)">
<path d="M0.3 9 L6.8 0.5 L13.3 9 L6.8 17.5 Z" fill="#fafafa" stroke="#8c2fa8" stroke-width="1.1" stroke-linejoin="round"/>
<path d="M5.4 9 L11.7 0.5 L18 9 L11.7 17.5 Z" fill="#fafafa" stroke="#8c2fa8" stroke-width="1.1" stroke-linejoin="round"/>
<path d="M8.55 4.75 L14.85 13.25 M8.55 13.25 L14.85 4.75" stroke="#8c2fa8" stroke-width="1"/></g>
<path d="M1015 187.5 H1034" stroke="#252423" stroke-width="1.3"/>
<rect x="1015.7" y="192.6" width="23" height="7.5" fill="#117865" stroke="#1a1a1a" stroke-width="1.3" stroke-dasharray="1.8 1.1"/>
<rect x="1015.7" y="202.8" width="23" height="7.7" fill="#117865" stroke="#1a1a1a" stroke-width="1.3" stroke-dasharray="1.8 1.1"/>
<path d="M1085 210.5 H1081.5 V187.5 H1091.5 L1098 194 V198" fill="none" stroke="#252423" stroke-width="1.1"/>
<path d="M1091.5 187.5 V194.5 H1098" fill="none" stroke="#252423" stroke-width="1"/>
<path d="M1104.5 195.5 Q1106 195 1105 197 L1093 205.5" fill="none" stroke="#252423" stroke-width="1.1"/>
<path d="M1092.5 203.5 L1095 206 Q1093 210.5 1087 209.8 Q1090 208.5 1090.5 205 Z" fill="#f3f2f1" stroke="#252423" stroke-width="1.1"/>
<path d="M1103.5 195 L1094.5 203.5" stroke="#252423" stroke-width="1.1"/>
<path d="M1003 227.5 H1019.5 L1027 220 L1034.5 227.5 H1152" fill="none" stroke="#605e5c" stroke-width="1"/>
<circle cx="1016.0" cy="443" r="1" fill="#252423"/>
<circle cx="1022.5" cy="443" r="1" fill="#252423"/>
<circle cx="1029.0" cy="443" r="1" fill="#252423"/>
<line x1="1003" y1="462.5" x2="1152" y2="462.5" stroke="#d8d6d4" stroke-width="1" />
<text x="1015" y="484" font-size="12" fill="#252423" font-weight="normal" text-anchor="start" >Values</text>
<rect x="1007.5" y="493.5" width="160" height="27" fill="#fff" stroke="#c8c6c4" stroke-dasharray="3 2"/>
<text x="1018.5" y="512" font-size="12" fill="#252423" font-weight="normal" text-anchor="start" >Add data fields here</text>
<text x="1015" y="544" font-size="12" fill="#252423" stroke="#252423" stroke-width="0.4" text-anchor="start" >Drill through</text>
<text x="1015" y="569" font-size="12" fill="#252423" font-weight="normal" text-anchor="start" >Cross-report</text>
<text x="1015" y="596" font-size="12" fill="#252423" font-weight="normal" text-anchor="start" >Keep all filters</text>
<rect x="1129.5" y="557.5" width="40" height="15" rx="7.5" fill="#fff" stroke="#605e5c"/>
<circle cx="1137.5" cy="565" r="3.5" fill="#605e5c"/>
<text x="1143" y="569" font-size="10" fill="#252423" font-weight="normal" text-anchor="start" >Off</text>
<rect x="1129" y="584" width="40" height="16" rx="8" fill="#117865"/>
<text x="1133" y="596" font-size="10" fill="#fff" font-weight="bold" text-anchor="start" >On</text>
<circle cx="1152" cy="592" r="4.5" fill="#fff"/>
<rect x="1007.5" y="609.5" width="160" height="26" fill="#fff" stroke="#c8c6c4" stroke-dasharray="3 2"/>
<text x="1016.8" y="628" font-size="12" fill="#252423" font-weight="normal" text-anchor="start" >Add drill-through fields here</text>
<rect x="39" y="634" width="924" height="35" fill="#ffffff" />
<rect x="39" y="634" width="127" height="35" fill="#f3f2f1" />
<line x1="166.5" y1="634" x2="166.5" y2="669" stroke="#8a8886" stroke-width="1" />
<line x1="220.5" y1="634" x2="220.5" y2="669" stroke="#d2d0ce" stroke-width="1" />
<line x1="324.5" y1="634" x2="324.5" y2="669" stroke="#d2d0ce" stroke-width="1" />
<line x1="447.5" y1="634" x2="447.5" y2="669" stroke="#d2d0ce" stroke-width="1" />
<line x1="610.5" y1="634" x2="610.5" y2="669" stroke="#d2d0ce" stroke-width="1" />
<line x1="720.5" y1="634" x2="720.5" y2="669" stroke="#d2d0ce" stroke-width="1" />
<line x1="800.5" y1="634" x2="800.5" y2="669" stroke="#d2d0ce" stroke-width="1" />
<clipPath id="tc"><rect x="167" y="634" width="60" height="35"/></clipPath>
<text x="165" y="658" font-size="12" fill="#252423" font-weight="normal" text-anchor="start" clip-path="url(#tc)">ница 1</text>
<text x="272.5" y="658" font-size="12" fill="#252423" font-weight="normal" text-anchor="middle" >Страница 3</text>
<text x="386" y="658" font-size="12" fill="#252423" font-weight="normal" text-anchor="middle" >интервалы в %</text>
<text x="529" y="658" font-size="12" fill="#252423" font-weight="normal" text-anchor="middle" >интервалы в клиентах</text>
<text x="665.5" y="658" font-size="12" fill="#252423" stroke="#252423" stroke-width="0.45" text-anchor="middle" >Постоянные</text>
<text x="761" y="658" font-size="12" fill="#252423" font-weight="normal" text-anchor="middle" >Редкие</text>
<text x="882" y="658" font-size="12" fill="#252423" font-weight="normal" text-anchor="middle" >Постоянные + Редкие</text>
<rect x="611" y="665" width="109" height="4" fill="#117865" />
<rect x="963" y="634" width="39" height="35" fill="#117865" />
<path d="M982.5 644.8 V656 M977 650.4 H988.1" stroke="#fff" stroke-width="3.1"/>
<rect x="51.5" y="641.5" width="18" height="11" fill="none" stroke="#252423" stroke-width="1.2"/><path d="M57 655.5 H64 M60.5 652.5 V655.5" stroke="#252423" stroke-width="1.2"/>
<rect x="49" y="662" width="24" height="3" fill="#117865" rx="1.5"/>
<rect x="99" y="639.5" width="12" height="19" rx="1" fill="none" stroke="#605e5c" stroke-width="1.1"/><rect x="104" y="654.5" width="2" height="1.5" fill="#605e5c"/>
<path d="M137 648 L132.5 652 L137 656 Z" fill="#252423"/>
<path d="M155 648 L159.5 652 L155 656 Z" fill="#c8c6c4"/>
<text x="1006" y="616" font-size="19.5" fill="#8a8a8a" font-weight="normal" text-anchor="start" fill-opacity="0.58">Активация Windows</text>
<text x="1006" y="635" font-size="14.8" fill="#8a8a8a" font-weight="normal" text-anchor="start" fill-opacity="0.58">Чтобы активировать Windows, перейдите в</text>
<text x="1006" y="657" font-size="14.8" fill="#8a8a8a" font-weight="normal" text-anchor="start" fill-opacity="0.58">раздел "Параметры".</text>
<text x="3" y="687.5" font-size="12.5" fill="#252423" font-weight="normal" text-anchor="start" >Page 7 of 8</text>
<rect x="1000" y="676" width="4" height="4" fill="#444" />
<rect x="1019.5" y="678" width="1" height="2" fill="#444" />
<rect x="1078.5" y="677" width="1" height="3" fill="#444" />
<text x="1097" y="687" font-size="12" fill="#252423" font-weight="normal" text-anchor="start" >60%</text>
<rect x="1138.5" y="676.5" width="14" height="8" fill="none" stroke="#444"/>
</svg>
</body></html>
